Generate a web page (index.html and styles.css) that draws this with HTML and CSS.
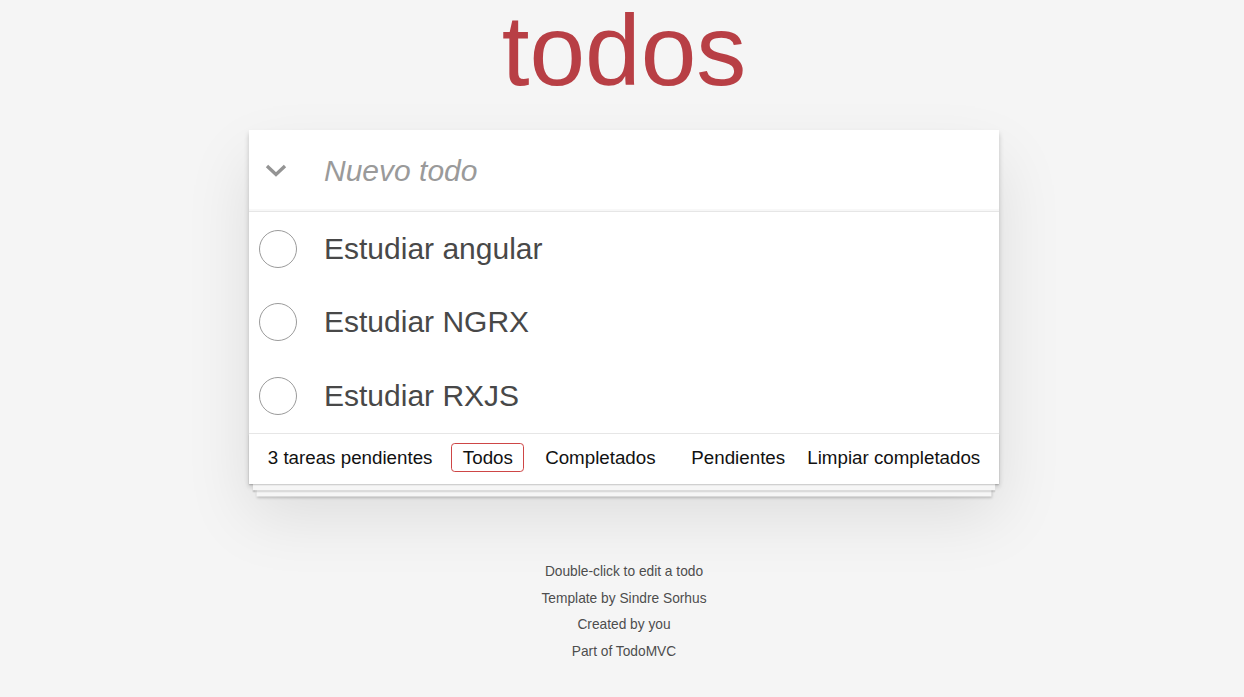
FILE: index.html
```
<!DOCTYPE html>
<html lang="es">
<head>
<meta charset="utf-8">
<title>Todos</title>
<link rel="stylesheet" href="styles.css">
</head>
<body>
<div class="page">
  <h1 class="title">todos</h1>
  <section class="todoapp">
    <header class="header">
      <label class="toggle-all" aria-label="Marcar todos">
        <svg width="22" height="13" viewBox="0 0 22 13"><polyline points="2,2 11,10.5 20,2" fill="none" stroke="#949494" stroke-width="3.4"/></svg>
      </label>
      <input class="new-todo" placeholder="Nuevo todo">
    </header>
    <ul class="todo-list">
      <li class="todo"><span class="toggle"></span><span class="todo-label">Estudiar angular</span></li>
      <li class="todo"><span class="toggle"></span><span class="todo-label">Estudiar NGRX</span></li>
      <li class="todo"><span class="toggle"></span><span class="todo-label">Estudiar RXJS</span></li>
    </ul>
    <footer class="footer">
      <span class="todo-count">3 tareas pendientes</span>
      <ul class="filters"><li><a class="filter selected">Todos</a></li><li><a class="filter">Completados</a></li> <li><a class="filter">Pendientes</a></li></ul>
      <button class="clear-completed">Limpiar completados</button>
    </footer>
  </section>
  <footer class="info">
    <p>Double-click to edit a todo</p>
    <p>Template by Sindre Sorhus</p>
    <p>Created by you</p>
    <p>Part of TodoMVC</p>
  </footer>
</div>
</body>
</html>
```
FILE: styles.css
```
html, body {
  margin: 0;
  padding: 0;
}
body {
  background: #f5f5f5;
  color: #111111;
  font-family: "Liberation Sans", Arial, sans-serif;
  padding-left: 4px;
}
.page {
  max-width: 750px;
  margin: 0 auto;
}
.title {
  margin: 0;
  height: 100px;
  font-size: 100px;
  line-height: 100px;
  font-weight: 400;
  text-align: center;
  color: #b83f45;
}
.todoapp {
  position: relative;
  margin-top: 30px;
  background: #fff;
  box-shadow: 0 2.5px 5px 0 rgba(0,0,0,0.2), 0 31px 62px 0 rgba(0,0,0,0.1);
}
.header {
  display: flex;
  align-items: center;
  height: 81px;
  box-shadow: inset 0 -2px 1px rgba(0,0,0,0.03);
}
.toggle-all {
  width: 56px;
  height: 81px;
  display: flex;
  align-items: center;
  justify-content: center;
  flex: none;
}
.toggle-all svg {
  display: block;
  margin-right: 2px;
}
.new-todo {
  flex: 1;
  height: 81px;
  border: none;
  outline: none;
  background: transparent;
  margin: 0;
  padding: 0 20px 0 19px;
  font-family: inherit;
  font-size: 30px;
  line-height: 42px;
  color: #111;
}
.new-todo::placeholder {
  font-style: italic;
  color: #9a9a9a;
}
.todo-list {
  list-style: none;
  margin: 0;
  padding: 0;
  border-top: 1px solid #e6e6e6;
}
.todo {
  display: flex;
  align-items: center;
  height: 73.5px;
}
.toggle {
  flex: none;
  box-sizing: border-box;
  width: 38px;
  height: 38px;
  margin-left: 10px;
  margin-right: 27px;
  border: 1.2px solid #9b9b9b;
  border-radius: 50%;
}
.todo-label {
  font-size: 30px;
  line-height: 36px;
  color: #484848;
}
.footer {
  position: relative;
  box-sizing: border-box;
  display: grid;
  grid-template-columns: 1fr auto 1fr;
  align-items: center;
  height: 51px;
  padding: 0 18.75px 2px;
  border-top: 1px solid #e6e6e6;
  font-size: 18.75px;
  line-height: 20px;
  color: #111;
}
.footer::before {
  content: '';
  position: absolute;
  left: 0;
  right: 0;
  bottom: 0;
  height: 50px;
  overflow: hidden;
  pointer-events: none;
  box-shadow: 0 1.25px 1.25px rgba(0,0,0,0.2),
    0 10px 0 -3.75px #f6f6f6,
    0 11.25px 1.25px -3.75px rgba(0,0,0,0.2),
    0 20px 0 -7.5px #f6f6f6,
    0 21.25px 2.5px -7.5px rgba(0,0,0,0.2);
}
.todo-count {
  justify-self: start;
  position: relative;
}
.filters {
  list-style: none;
  margin: 0;
  padding: 0;
  white-space: nowrap;
  position: relative;
}
.filters li {
  display: inline;
}
.filter {
  display: inline-block;
  margin: 0 3.75px;
  padding: 3.75px 10.5px;
  line-height: 20px;
  border: 1.25px solid transparent;
  border-radius: 3.75px;
  color: inherit;
  text-decoration: none;
}
.filter.selected {
  border-color: #ce4646;
  margin-right: 5.5px;
}
.clear-completed {
  justify-self: end;
  position: relative;
  border: none;
  background: none;
  margin: 0;
  padding: 0;
  font-family: inherit;
  font-size: 18.75px;
  line-height: 20px;
  color: #111;
}
.info {
  margin-top: 75.5px;
  text-align: center;
  font-size: 13.75px;
  color: #4d4d4d;
  text-shadow: 0 1px 0 rgba(255,255,255,0.5);
}
.info p {
  margin: 0;
  line-height: 26.67px;
}
```
